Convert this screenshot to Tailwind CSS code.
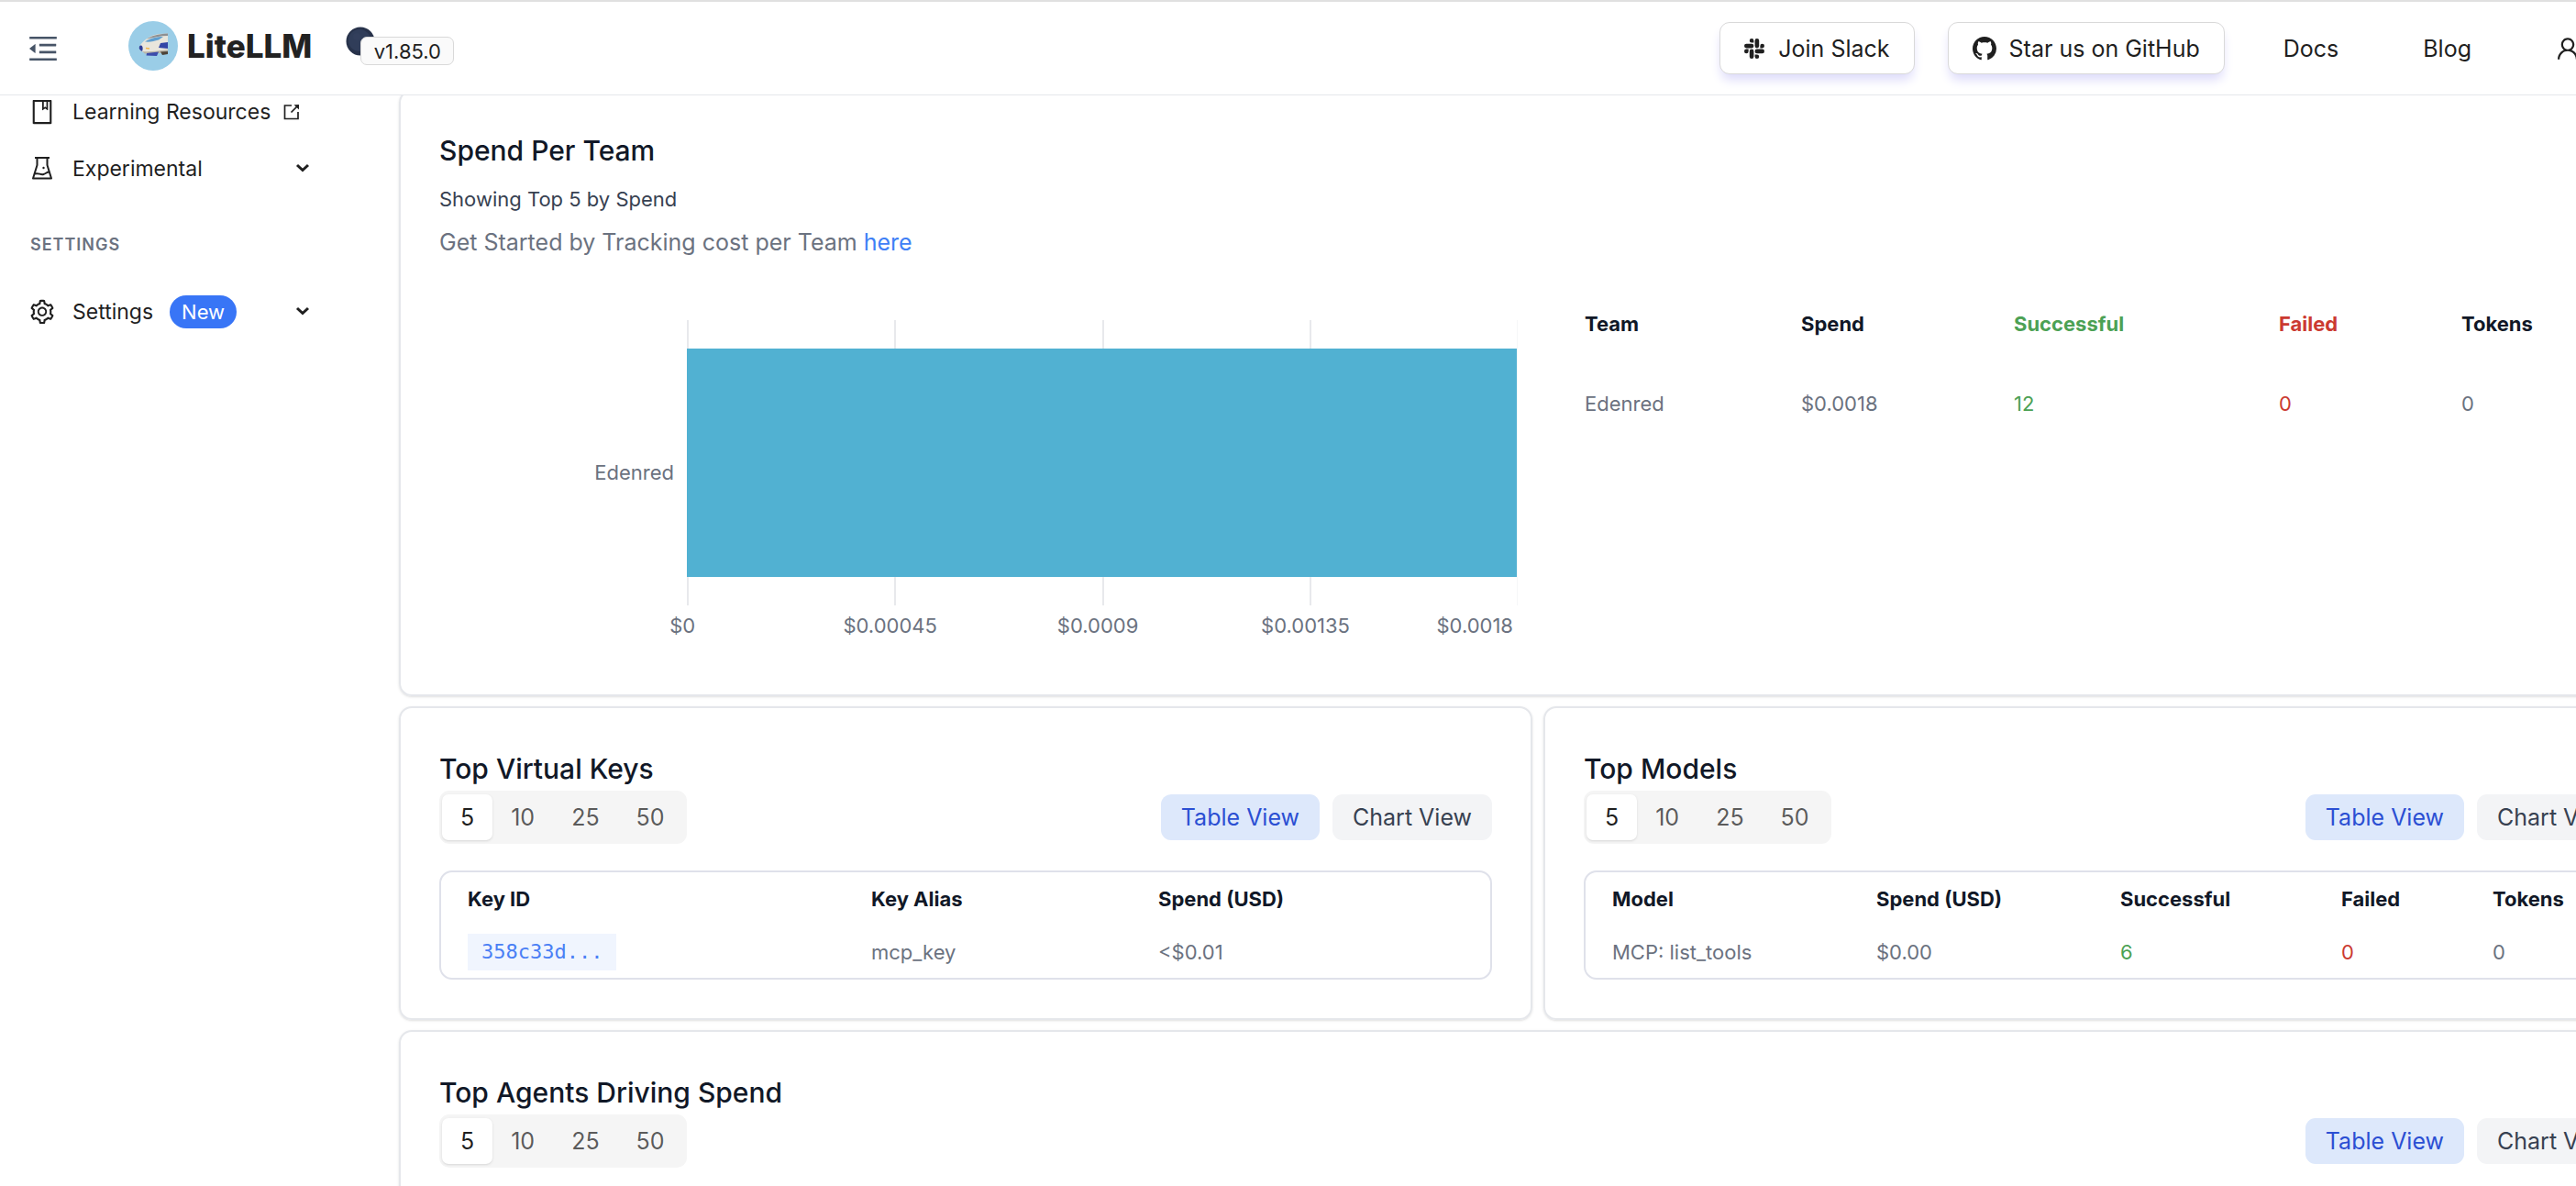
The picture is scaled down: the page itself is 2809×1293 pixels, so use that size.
<!DOCTYPE html>
<html lang="en">
<head>
<meta charset="utf-8">
<title>LiteLLM Dashboard</title>
<script src="https://cdn.jsdelivr.net/npm/@tailwindcss/browser@4"></script>
</head>
<body class="h-screen overflow-hidden bg-white font-['Inter',sans-serif] text-[#1f1f1f]">

<header class="relative z-10 flex h-[104px] items-center border-t-2 border-b border-t-[#e0e0e0] border-b-[#e5e7eb] bg-white pl-7">
  <button type="button" aria-label="Collapse sidebar" class="text-[#475467]">
    <svg class="size-[38px]" viewBox="0 0 1024 1024" fill="currentColor"><path d="M408 442h480c4.400 0 8-3.600 8-8v-56c0-4.400-3.600-8-8-8H408c-4.400 0-8 3.600-8 8v56c0 4.400 3.600 8 8 8zm-8 204c0 4.400 3.600 8 8 8h480c4.400 0 8-3.600 8-8v-56c0-4.400-3.600-8-8-8H408c-4.400 0-8 3.600-8 8v56zm504-486H120c-4.400 0-8 3.600-8 8v56c0 4.400 3.600 8 8 8h784c4.400 0 8-3.600 8-8v-56c0-4.400-3.600-8-8-8zm0 632H120c-4.400 0-8 3.600-8 8v56c0 4.400 3.600 8 8 8h784c4.400 0 8-3.600 8-8v-56c0-4.400-3.600-8-8-8zM115.400 518.900L271.700 642c5.800 4.600 14.400.5 14.400-6.900V388.900c0-7.400-8.500-11.500-14.400-6.900L115.400 505.100a8.740 8.740 0 000 13.800z"/></svg>
  </button>
  <div class="ml-[74px] flex items-center pb-[5px]">
    <a href="#" class="flex items-center gap-[10px]">
      <svg class="size-[54px]" viewBox="0 0 54 54">
        <circle cx="27" cy="27" r="27" fill="#9acde7"/>
        <path d="M12 28C15 22 23 15 34 14L43 13.500V35L20 34.500C15 34.500 11 31 12 28Z" fill="#e9e6dc"/>
        <path d="M20 19.500C25 16 32 14 43 13.500V16C34 16 27 18 20 19.500Z" fill="#8d8f92"/>
        <path d="M18 22.500C24 18.500 31 17 38 17L33 20.500C28 22 24 23 18 22.500Z" fill="#5f9fd0"/>
        <path d="M12 27.500C14 25 17 28 15 33C12.500 32 11 30 12 27.500Z" fill="#2f3f9a"/>
        <path d="M33 29L35 24L43 23V30Z" fill="#3346a6"/>
        <path d="M15 33C24 34 34 32 43 31V33.500L30 35.500L18 35.500Z" fill="#b9b5a8"/>
        <path d="M20 35L33 33.500L31 38L19.500 37.500Z" fill="#3c4cab"/>
        <path d="M35 33.500L43 33V36L37 37Z" fill="#4c4338"/>
        <path d="M19 29.500L23 30" stroke="#f3b64b" stroke-width="1.500"/>
      </svg>
      <span class="text-[35px] leading-10 font-extrabold text-[#222222]">LiteLLM</span>
    </a>
    <div class="relative ml-[37px] h-[42px] w-[118px]">
      <svg class="size-8" viewBox="0 0 32 32"><circle cx="16" cy="16" r="15.500" fill="#27324a"/><circle cx="15" cy="15" r="12" fill="#303d59"/><circle cx="12" cy="11" r="4" fill="#38466450"/></svg>
      <span class="absolute right-0 bottom-0 flex h-[31px] w-[102px] items-center justify-center rounded-[7px] border border-[#d9d9d9] bg-[#fafafa] text-[22px] leading-7">v1.85.0</span>
    </div>
  </div>
  <nav class="-mr-[6px] ml-auto flex shrink-0 items-center text-[25px] leading-8">
    <a href="#" class="flex h-[57px] items-center gap-[15px] rounded-[11px] border border-[#d9d9d9] bg-white px-[26px] shadow-[0_8px_12px_-2px_#dcdafa]">
      <svg class="size-[22px]" viewBox="0 0 24 24" fill="currentColor"><path d="M5.042 15.165a2.528 2.528 0 0 1-2.520 2.523A2.528 2.528 0 0 1 0 15.165a2.527 2.527 0 0 1 2.522-2.520h2.520v2.520zM6.313 15.165a2.527 2.527 0 0 1 2.521-2.520 2.527 2.527 0 0 1 2.521 2.520v6.313A2.528 2.528 0 0 1 8.834 24a2.528 2.528 0 0 1-2.521-2.522v-6.313zM8.834 5.042a2.528 2.528 0 0 1-2.521-2.520A2.528 2.528 0 0 1 8.834 0a2.528 2.528 0 0 1 2.521 2.522v2.520H8.834zM8.834 6.313a2.528 2.528 0 0 1 2.521 2.521 2.528 2.528 0 0 1-2.521 2.521H2.522A2.528 2.528 0 0 1 0 8.834a2.528 2.528 0 0 1 2.522-2.521h6.312zM18.956 8.834a2.528 2.528 0 0 1 2.522-2.521A2.528 2.528 0 0 1 24 8.834a2.528 2.528 0 0 1-2.522 2.521h-2.522V8.834zM17.688 8.834a2.528 2.528 0 0 1-2.523 2.521 2.527 2.527 0 0 1-2.520-2.521V2.522A2.527 2.527 0 0 1 15.165 0a2.528 2.528 0 0 1 2.523 2.522v6.312zM15.165 18.956a2.528 2.528 0 0 1 2.523 2.522A2.528 2.528 0 0 1 15.165 24a2.527 2.527 0 0 1-2.520-2.522v-2.522h2.520zM15.165 17.688a2.527 2.527 0 0 1-2.520-2.523 2.526 2.526 0 0 1 2.520-2.520h6.313A2.527 2.527 0 0 1 24 15.165a2.528 2.528 0 0 1-2.522 2.523h-6.313z"/></svg>
      Join Slack
    </a>
    <a href="#" class="ml-9 flex h-[57px] items-center gap-[14px] rounded-[11px] border border-[#d9d9d9] bg-white px-[26px] shadow-[0_8px_12px_-2px_#dcdafa]">
      <svg class="size-[26px]" viewBox="0 0 16 16" fill="currentColor"><path d="M8 0C3.580 0 0 3.580 0 8c0 3.540 2.290 6.530 5.470 7.590.4.070.55-.17.55-.38 0-.19-.01-.82-.01-1.490-2.010.37-2.530-.49-2.690-.94-.09-.23-.48-.94-.82-1.130-.28-.15-.68-.52-.01-.53.63-.01 1.080.58 1.230.82.72 1.210 1.870.87 2.330.66.07-.52.28-.87.51-1.070-1.780-.2-3.640-.89-3.640-3.950 0-.87.31-1.590.82-2.150-.08-.2-.36-1.020.08-2.120 0 0 .67-.21 2.200.82.64-.18 1.320-.27 2-.27s1.360.09 2 .27c1.530-1.040 2.200-.82 2.200-.82.44 1.100.16 1.920.08 2.120.51.56.82 1.270.82 2.150 0 3.070-1.870 3.750-3.650 3.950.29.25.54.73.54 1.480 0 1.070-.01 1.930-.01 2.200 0 .21.15.46.55.38A8.010 8.010 0 0 0 16 8c0-4.420-3.580-8-8-8z"/></svg>
      Star us on GitHub
    </a>
    <a href="#" class="ml-16">Docs</a>
    <a href="#" class="ml-[92px]">Blog</a>
    <button type="button" aria-label="User menu" class="ml-[90px]">
      <svg class="size-[30px]" viewBox="0 0 1024 1024" fill="currentColor"><path d="M858.500 763.600a374 374 0 00-80.600-119.500 375.630 375.630 0 00-119.500-80.600c-.4-.2-.8-.3-1.200-.5C719.500 518 760 444.700 760 362c0-137-111-248-248-248S264 225 264 362c0 82.700 40.500 156 102.800 201.100-.4.2-.8.3-1.200.5-44.800 18.900-85 46-119.500 80.600a375.630 375.630 0 00-80.600 119.500A371.700 371.700 0 00136 901.800a8 8 0 008 8.200h60c4.400 0 7.900-3.500 8-7.800 2-77.200 33-149.500 87.800-204.300 56.700-56.700 132-87.900 212.200-87.900s155.500 31.200 212.200 87.900C779 752.700 810 825 812 902.200c.1 4.400 3.600 7.800 8 7.800h60a8 8 0 008-8.200c-1-47.800-10.900-94.300-29.500-138.200zM512 534c-45.900 0-89.100-17.900-121.600-50.400S340 407.900 340 362c0-45.900 17.900-89.100 50.400-121.600S466.100 190 512 190s89.100 17.900 121.600 50.400S684 316.100 684 362c0 45.900-17.900 89.100-50.400 121.600S557.900 534 512 534z"/></svg>
    </button>
  </nav>
</header>

<div class="flex items-start">
  <aside class="w-[435px] shrink-0 pr-[97px] pl-[31px] text-[23px] leading-9">
    <a href="#" class="flex h-9 items-center gap-[18px]">
      <svg class="size-[30px]" viewBox="0 0 1024 1024" fill="currentColor"><path d="M832 64H192c-17.700 0-32 14.300-32 32v832c0 17.700 14.300 32 32 32h640c17.700 0 32-14.300 32-32V96c0-17.700-14.300-32-32-32zm-260 72h96v209.900L621.500 312 572 347.400V136zm220 752H232V136h280v296.900c0 3.300 1 6.600 3 9.300a15.900 15.900 0 0022.300 3.700l83.800-59.900 81.400 59.400c2.700 2 6 3.100 9.400 3.100 8.800 0 16-7.200 16-16V136h64v752z"/></svg>
      Learning Resources
      <svg class="-ml-1 size-[18px]" viewBox="0 0 18 18" fill="none" stroke="currentColor" stroke-width="1.700"><path d="M9 2H1.500V16.500H16V9"/><path d="M8.500 9.500L15 3"/><path d="M11.500 1.300L17 1V6.500Z" fill="currentColor" stroke="none"/></svg>
    </a>
    <button type="button" class="mt-[26px] flex h-9 w-full items-center gap-[18px]">
      <svg class="size-[30px]" viewBox="0 0 30 30" fill="none" stroke="currentColor" stroke-width="2" stroke-linejoin="round"><path d="M7 3H23"/><path d="M9.500 3V11L5 25.500H25L20.500 11V3"/><path d="M7 20.500C11 19 13 22 16.500 21C19 20.300 20 18.500 22.500 18.500"/><circle cx="16.500" cy="14" r="1.200" fill="currentColor" stroke="none"/></svg>
      Experimental
      <svg class="ml-auto size-4" viewBox="0 0 16 16" fill="none" stroke="currentColor" stroke-width="3"><path d="M2 4L8 9.500L14 4"/></svg>
    </button>
    <h2 class="mt-[47px] pl-[2px] text-[18px] leading-9 font-semibold tracking-[1px] text-[#6b7280]">SETTINGS</h2>
    <button type="button" class="mt-[37px] flex h-9 w-full items-center gap-[18px]">
      <svg class="size-[30px]" viewBox="0 0 1024 1024" fill="currentColor"><path d="M924.800 625.700l-65.500-56c3.100-19 4.700-38.400 4.700-57.800s-1.600-38.800-4.700-57.800l65.500-56a32.030 32.030 0 009.300-35.200l-.9-2.600a443.740 443.740 0 00-79.700-137.900l-1.800-2.100a32.120 32.120 0 00-35.100-9.500l-81.300 28.900c-30-24.600-63.500-44-99.700-57.600l-15.700-85a32.050 32.050 0 00-25.800-25.700l-2.700-.5c-52.100-9.400-106.900-9.400-159 0l-2.700.5a32.050 32.050 0 00-25.800 25.700l-15.800 85.400a351.860 351.860 0 00-99 57.400l-81.900-29.100a32 32 0 00-35.100 9.500l-1.800 2.100a446.020 446.020 0 00-79.700 137.900l-.9 2.600c-4.500 12.500-.8 26.500 9.300 35.200l66.300 56.600c-3.100 18.800-4.600 38-4.600 57.100 0 19.200 1.500 38.400 4.600 57.100L99 625.500a32.030 32.030 0 00-9.300 35.200l.9 2.600c18.100 50.400 44.900 96.900 79.700 137.900l1.800 2.100a32.120 32.120 0 0035.100 9.500l81.900-29.100c29.800 24.500 63.100 43.900 99 57.400l15.800 85.400a32.050 32.050 0 0025.800 25.700l2.700.5a449.400 449.400 0 00159 0l2.700-.5a32.050 32.050 0 0025.800-25.700l15.700-85a350 350 0 0099.700-57.600l81.300 28.900a32 32 0 0035.100-9.500l1.800-2.100c34.800-41.100 61.600-87.500 79.700-137.900l.9-2.600c4.500-12.300.8-26.300-9.300-35zM788.300 465.900c2.500 15.100 3.800 30.600 3.800 46.100s-1.300 31-3.800 46.100l-6.600 40.100 74.700 63.900a370.030 370.030 0 01-42.600 73.600L721 702.800l-31.400 25.800c-23.900 19.600-50.500 35-79.300 45.800l-38.100 14.300-17.900 97a377.500 377.500 0 01-85 0l-17.900-97.200-37.800-14.500c-28.500-10.800-55-26.200-78.700-45.700l-31.400-25.900-93.400 33.200c-17-22.900-31.200-47.600-42.600-73.600l75.500-64.500-6.500-40c-2.400-14.900-3.700-30.300-3.700-45.500 0-15.300 1.200-30.600 3.700-45.500l6.500-40-75.500-64.500c11.300-26.100 25.600-50.700 42.600-73.600l93.400 33.200 31.400-25.900c23.700-19.500 50.200-34.900 78.700-45.700l37.900-14.300 17.900-97.200c28.100-3.200 56.800-3.200 85 0l17.900 97 38.100 14.300c28.700 10.800 55.400 26.200 79.300 45.800l31.400 25.800 92.800-32.900c17 22.900 31.200 47.600 42.600 73.600L781.800 426l6.500 39.900zM512 326c-97.200 0-176 78.800-176 176s78.800 176 176 176 176-78.800 176-176-78.800-176-176-176zm79.200 255.200A111.600 111.600 0 01512 614c-29.900 0-58-11.700-79.200-32.800A111.600 111.600 0 01400 502c0-29.900 11.700-58 32.800-79.200C454 401.600 482.100 390 512 390c29.900 0 58 11.600 79.200 32.800A111.600 111.600 0 01624 502c0 29.900-11.700 58-32.800 79.200z"/></svg>
      Settings
      <span class="rounded-full bg-[#3875f6] px-[13px] text-[22px] leading-9 text-white">New</span>
      <svg class="ml-auto size-4" viewBox="0 0 16 16" fill="none" stroke="currentColor" stroke-width="3"><path d="M2 4L8 9.500L14 4"/></svg>
    </button>
  </aside>

  <!-- The dashboard is wider than the viewport and runs off its right edge -->
  <main class="-mt-[6px] -mr-[110px] grid min-w-0 flex-1 grid-cols-2 gap-x-3 gap-y-[11px]">
    <section class="col-span-2 rounded-[14px] border-2 border-[#e5e7eb] p-[42px] shadow-sm">
      <h2 class="text-[30px] leading-[44px] font-medium text-[#111827]">Spend Per Team</h2>
      <p class="mt-[13px] text-[22px] leading-9 text-[#374151]">Showing Top 5 by Spend</p>
      <p class="mt-[9px] text-[25px] leading-10 text-[#6b7280]">Get Started by Tracking cost per Team <a href="#" class="text-[#4080f6]">here</a></p>
      <div class="mt-[26px] grid grid-cols-2 text-[22px] leading-9 text-[#6b7280]">
        <div class="h-[405px] pt-[39px]">
          <div class="flex pr-[22px]">
            <div class="flex w-[270px] items-center justify-end pt-[21px] pr-[14px]">Edenred</div>
            <div class="grid h-[311px] flex-1 grid-cols-4 border-r border-r-[#f6f7f8]">
              <div class="col-start-1 row-start-1 border-l-2 border-[#e8e9ec]"></div>
              <div class="col-start-2 row-start-1 border-l-2 border-[#e8e9ec]"></div>
              <div class="col-start-3 row-start-1 border-l-2 border-[#e8e9ec]"></div>
              <div class="col-start-4 row-start-1 border-l-2 border-[#e8e9ec]"></div>
              <div class="col-span-4 col-start-1 row-start-1 my-[31px] bg-[#51b1d2]"></div>
            </div>
          </div>
          <div class="mt-1 grid grid-cols-[2fr_2fr_2fr_2fr_1fr] pr-[27px] pl-[152px] text-center">
            <span>$0</span><span>$0.00045</span><span>$0.0009</span><span>$0.00135</span><span class="flex justify-end">$0.0018</span>
          </div>
        </div>
        <div class="pl-[22px]">
          <table class="w-full table-fixed text-left">
            <thead>
              <tr class="h-[86px] font-semibold text-[#111827]">
                <th class="w-[236px] pl-[29px]">Team</th><th class="w-[232px] pl-[29px]">Spend</th><th class="w-[289px] pl-[29px] text-[#4ca154]">Successful</th><th class="w-[199px] pl-[29px] text-[#cb3a31]">Failed</th><th class="pl-[29px]">Tokens</th>
              </tr>
            </thead>
            <tbody>
              <tr class="h-[88px]">
                <td class="pl-[29px]">Edenred</td><td class="pl-[29px]">$0.0018</td><td class="pl-[29px] text-[#4ca154]">12</td><td class="pl-[29px] text-[#cb3a31]">0</td><td class="pl-[29px]">0</td>
              </tr>
            </tbody>
          </table>
        </div>
      </div>
    </section>

    <section class="rounded-[14px] border-2 border-[#e5e7eb] p-[42px] shadow-sm">
      <h2 class="text-[30px] leading-[48px] font-medium text-[#111827]">Top Virtual Keys</h2>
      <div class="flex items-center justify-between text-[25px]">
        <fieldset class="flex rounded-[11px] bg-[#f5f5f5] py-1 pr-1 pl-[3px] leading-[50px] text-black/65">
          <label class="relative rounded-[7px] px-5 has-checked:bg-white has-checked:text-black/88 has-checked:shadow-sm"><input type="radio" name="keys" class="sr-only" checked>5</label>
          <label class="relative rounded-[7px] px-5 has-checked:bg-white"><input type="radio" name="keys" class="sr-only">10</label>
          <label class="relative rounded-[7px] px-5 has-checked:bg-white"><input type="radio" name="keys" class="sr-only">25</label>
          <label class="relative rounded-[7px] px-5 has-checked:bg-white"><input type="radio" name="keys" class="sr-only">50</label>
        </fieldset>
        <div class="flex gap-[14px] leading-[50px]">
          <button type="button" class="rounded-[11px] bg-[#dde8fb] px-[22px] text-[#2b4fd3]">Table View</button>
          <button type="button" class="rounded-[11px] bg-[#f3f4f6] px-[22px] text-[#374151]">Chart View</button>
        </div>
      </div>
      <div class="mt-[29px] rounded-[14px] border-2 border-[#dfe1ea]">
        <table class="w-full table-fixed text-left text-[22px] leading-9 text-[#6b7280]">
          <thead>
            <tr class="h-[58px] font-semibold text-[#111827]">
              <th class="w-[440px] pl-[29px]">Key ID</th><th class="w-[313px] pl-[29px]">Key Alias</th><th class="pl-[29px]">Spend (USD)</th>
            </tr>
          </thead>
          <tbody>
            <tr class="h-[57px]">
              <td class="pl-[29px]"><button type="button" class="block bg-[#f0f5fe] px-[15px] font-['DejaVu_Sans_Mono',monospace] leading-10 text-[#4a80f5]">358c33d...</button></td><td class="pl-[29px]">mcp_key</td><td class="pl-[29px]">&lt;$0.01</td>
            </tr>
          </tbody>
        </table>
      </div>
    </section>

    <section class="rounded-[14px] border-2 border-[#e5e7eb] p-[42px] shadow-sm">
      <h2 class="text-[30px] leading-[48px] font-medium text-[#111827]">Top Models</h2>
      <div class="flex items-center justify-between text-[25px]">
        <fieldset class="flex rounded-[11px] bg-[#f5f5f5] py-1 pr-1 pl-[3px] leading-[50px] text-black/65">
          <label class="relative rounded-[7px] px-5 has-checked:bg-white has-checked:text-black/88 has-checked:shadow-sm"><input type="radio" name="models" class="sr-only" checked>5</label>
          <label class="relative rounded-[7px] px-5 has-checked:bg-white"><input type="radio" name="models" class="sr-only">10</label>
          <label class="relative rounded-[7px] px-5 has-checked:bg-white"><input type="radio" name="models" class="sr-only">25</label>
          <label class="relative rounded-[7px] px-5 has-checked:bg-white"><input type="radio" name="models" class="sr-only">50</label>
        </fieldset>
        <div class="flex gap-[14px] leading-[50px]">
          <button type="button" class="rounded-[11px] bg-[#dde8fb] px-[22px] text-[#2b4fd3]">Table View</button>
          <button type="button" class="rounded-[11px] bg-[#f3f4f6] px-[22px] text-[#374151]">Chart View</button>
        </div>
      </div>
      <div class="mt-[29px] rounded-[14px] border-2 border-[#dfe1ea]">
        <table class="w-full table-fixed text-left text-[22px] leading-9 text-[#6b7280]">
          <thead>
            <tr class="h-[58px] font-semibold text-[#111827]">
              <th class="w-[288px] pl-[29px]">Model</th><th class="w-[266px] pl-[29px]">Spend (USD)</th><th class="w-[241px] pl-[29px]">Successful</th><th class="w-[165px] pl-[29px]">Failed</th><th class="pl-[29px]">Tokens</th>
            </tr>
          </thead>
          <tbody>
            <tr class="h-[57px]">
              <td class="pl-[29px]">MCP: list_tools</td><td class="pl-[29px]">$0.00</td><td class="pl-[29px] text-[#4ca154]">6</td><td class="pl-[29px] text-[#cb3a31]">0</td><td class="pl-[29px]">0</td>
            </tr>
          </tbody>
        </table>
      </div>
    </section>

    <section class="col-span-2 rounded-[14px] border-2 border-[#e5e7eb] p-[42px] shadow-sm">
      <h2 class="text-[30px] leading-[48px] font-medium text-[#111827]">Top Agents Driving Spend</h2>
      <div class="flex items-center justify-between text-[25px]">
        <fieldset class="flex rounded-[11px] bg-[#f5f5f5] py-1 pr-1 pl-[3px] leading-[50px] text-black/65">
          <label class="relative rounded-[7px] px-5 has-checked:bg-white has-checked:text-black/88 has-checked:shadow-sm"><input type="radio" name="agents" class="sr-only" checked>5</label>
          <label class="relative rounded-[7px] px-5 has-checked:bg-white"><input type="radio" name="agents" class="sr-only">10</label>
          <label class="relative rounded-[7px] px-5 has-checked:bg-white"><input type="radio" name="agents" class="sr-only">25</label>
          <label class="relative rounded-[7px] px-5 has-checked:bg-white"><input type="radio" name="agents" class="sr-only">50</label>
        </fieldset>
        <div class="flex gap-[14px] leading-[50px]">
          <button type="button" class="rounded-[11px] bg-[#dde8fb] px-[22px] text-[#2b4fd3]">Table View</button>
          <button type="button" class="rounded-[11px] bg-[#f3f4f6] px-[22px] text-[#374151]">Chart View</button>
        </div>
      </div>
    </section>
  </main>
</div>
</body>
</html>
